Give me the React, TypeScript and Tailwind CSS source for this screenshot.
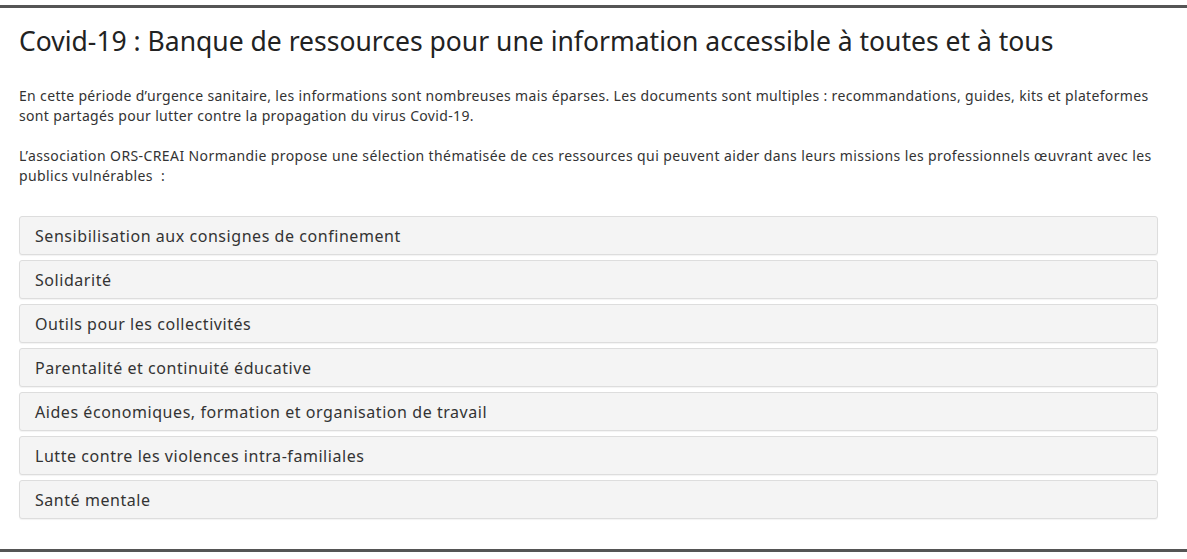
import React from "react";

const items = [
  "Sensibilisation aux consignes de confinement",
  "Solidarité",
  "Outils pour les collectivités",
  "Parentalité et continuité éducative",
  "Aides économiques, formation et organisation de travail",
  "Lutte contre les violences intra-familiales",
  "Santé mentale",
];

export default function App() {
  return (
    <div className="w-[1187px] h-[559px] bg-white pt-[5px] text-[#333]" style={{ fontFamily: '"Noto Sans", sans-serif' }}>
      <div className="border-t-[3px] border-b-[3px] border-[#555] h-[547px] pl-[19px] pr-[29px]">
        <h1 className="text-[26.5px] leading-[32px] mt-[17px] text-[#222]">
          Covid-19 : Banque de ressources pour une information accessible à toutes et à tous
        </h1>
        <p className="text-[14px] leading-[20px] mt-[29px] tracking-[0.34px]">
          En cette période d’urgence sanitaire, les informations sont nombreuses mais éparses. Les documents sont multiples : recommandations, guides, kits et plateformes sont partagés pour lutter contre la propagation du virus Covid-19.
        </p>
        <p className="text-[14px] leading-[20px] mt-[20px] tracking-[0.4px]">
          L’association ORS-CREAI Normandie propose une sélection thématisée de ces ressources qui peuvent aider dans leurs missions les professionnels œuvrant avec les publics vulnérables&nbsp; :
        </p>
        <div className="mt-[30px] flex flex-col gap-[5px]">
          {items.map((t) => (
            <div
              key={t}
              className="h-[39px] flex items-center px-[15px] bg-[#f4f4f4] border border-[#dddddd] rounded-[3px] shadow-[0_1px_1px_rgba(0,0,0,0.05)] text-[16px] tracking-[0.55px] text-[#333]"
            >
              {t}
            </div>
          ))}
        </div>
      </div>
    </div>
  );
}
